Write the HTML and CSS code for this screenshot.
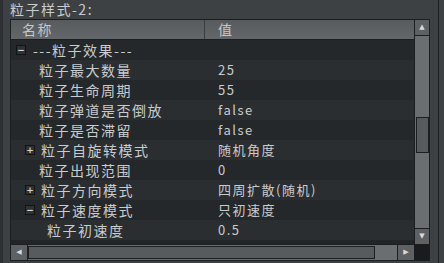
FILE: index.html
```html
<!DOCTYPE html>
<html lang="zh">
<head>
    <meta charset="UTF-8" />
    <title>粒子样式</title>
    <link rel="stylesheet" href="styles.css">
</head>
<body>
<div class="panel">
    <div class="title">粒子样式-2:</div>
    <div class="frame">
        <div class="viewport">
            <div class="head">
                <div class="hcell name">名称</div>
                <div class="hcell">值</div>
            </div>
            <div class="row odd">
                <div class="cell name lvl0"><span class="box">−</span>---粒子效果---</div>
                <div class="cell"></div>
            </div>
            <div class="row">
                <div class="cell name lvl1">粒子最大数量</div>
                <div class="cell val">25</div>
            </div>
            <div class="row odd">
                <div class="cell name lvl1">粒子生命周期</div>
                <div class="cell val">55</div>
            </div>
            <div class="row">
                <div class="cell name lvl1">粒子弹道是否倒放</div>
                <div class="cell val">false</div>
            </div>
            <div class="row odd">
                <div class="cell name lvl1">粒子是否滞留</div>
                <div class="cell val">false</div>
            </div>
            <div class="row">
                <div class="cell name lvl1"><span class="box">+</span>粒子自旋转模式</div>
                <div class="cell val">随机角度</div>
            </div>
            <div class="row odd">
                <div class="cell name lvl1">粒子出现范围</div>
                <div class="cell val">0</div>
            </div>
            <div class="row">
                <div class="cell name lvl1"><span class="box">+</span>粒子方向模式</div>
                <div class="cell val">四周扩散(随机)</div>
            </div>
            <div class="row odd">
                <div class="cell name lvl1"><span class="box">−</span>粒子速度模式</div>
                <div class="cell val">只初速度</div>
            </div>
            <div class="row">
                <div class="cell name lvl2">粒子初速度</div>
                <div class="cell val">0.5</div>
            </div>
        </div>
        <div class="vscroll">
            <div class="sbtn">▲</div>
            <div class="vtrack"><div class="vthumb"></div></div>
            <div class="sbtn">▼</div>
        </div>
        <div class="hscroll">
            <div class="sbtn">◀</div>
            <div class="htrack"><div class="hthumb"></div></div>
            <div class="sbtn">▶</div>
        </div>
        <div class="corner"></div>
    </div>
</div>
</body>
</html>
```

FILE: styles.css
```css
body {
    margin: 0;
    background-color: #3e4144;
    font-family: "Noto Sans CJK SC", "DejaVu Sans", sans-serif;
    color: #c9cbcd;
}

.panel {
    width: 435px;
    height: 263px;
    border-left: 3px solid #2d2f32;
    border-right: 1px solid #1f2123;
    box-sizing: content-box;
}

.title {
    height: 19px;
    padding-left: 7px;
    font-size: 14px;
    line-height: 19px;
    letter-spacing: 1.5px;
}

.frame {
    margin-left: 7px;
    width: 420px;
    height: 242px;
    box-sizing: border-box;
    border: 1px solid #1c1e20;
    display: grid;
    grid-template-columns: 403px 15px;
    grid-template-rows: 224px 16px;
}

.viewport {
    background-color: #222527;
    overflow: hidden;
}

.head {
    display: grid;
    grid-template-columns: 194px 209px;
    height: 19px;
    border-bottom: 1px solid #1c1e20;
    background: linear-gradient(#575b5e, #63676a);
}

.hcell {
    font-size: 14px;
    line-height: 19px;
    letter-spacing: 1.5px;
    padding-left: 13px;
    color: #c4c6c8;
}

.hcell.name {
    padding-left: 11px;
    border-right: 1px solid #3a3d40;
}

.row {
    display: grid;
    grid-template-columns: 194px 209px;
    height: 20px;
    background-color: #2b2e31;
}

.row.odd {
    background-color: #25282b;
}

.cell {
    font-size: 14px;
    line-height: 20px;
    letter-spacing: 1.5px;
    white-space: nowrap;
    display: flex;
    align-items: center;
}

.cell.val {
    padding-left: 13px;
    font-size: 13px;
}

.lvl0 { padding-left: 5px; }
.lvl1 { padding-left: 28px; }
.lvl2 { padding-left: 36px; }

.box {
    width: 8px;
    height: 8px;
    margin-left: -14px;
    margin-right: 6px;
    border: 1px solid #111315;
    background-color: #2f3235;
    color: #d0d2d4;
    font-size: 9px;
    line-height: 8px;
    letter-spacing: 0;
    text-align: center;
    font-family: "DejaVu Sans", sans-serif;
    font-weight: bold;
}

.lvl0 .box {
    margin-left: 0;
    margin-right: 7px;
}

.vscroll {
    border-left: 1px solid #1c1e20;
    background-color: #6a6e71;
    display: flex;
    flex-direction: column;
}

.sbtn {
    flex: none;
    width: 14px;
    height: 15px;
    background-color: #5d6164;
    color: #d8dadc;
    font-size: 7px;
    line-height: 15px;
    text-align: center;
    font-family: "DejaVu Sans", sans-serif;
}

.vscroll .sbtn:first-child {
    border-bottom: 1px solid #1c1e20;
}

.vscroll .sbtn:last-child {
    border-top: 1px solid #1c1e20;
}

.vtrack {
    flex: 1;
    padding-top: 81px;
}

.vthumb {
    width: 11px;
    height: 34px;
    margin-left: 1px;
    border: 1px solid #1c1e20;
    background-color: #575b5e;
    box-sizing: content-box;
}

.hscroll {
    border-top: 1px solid #1c1e20;
    background-color: #6a6e71;
    display: flex;
}

.hscroll .sbtn {
    width: 16px;
    height: 15px;
}

.hscroll .sbtn:first-child {
    border-right: 1px solid #1c1e20;
}

.hscroll .sbtn:last-child {
    border-left: 1px solid #1c1e20;
}

.htrack {
    flex: 1;
    padding: 1px 0 0 0;
}

.hthumb {
    width: 345px;
    height: 11px;
    border: 1px solid #1c1e20;
    background-color: #575b5e;
}

.corner {
    background-color: #1a1b1c;
}
```
